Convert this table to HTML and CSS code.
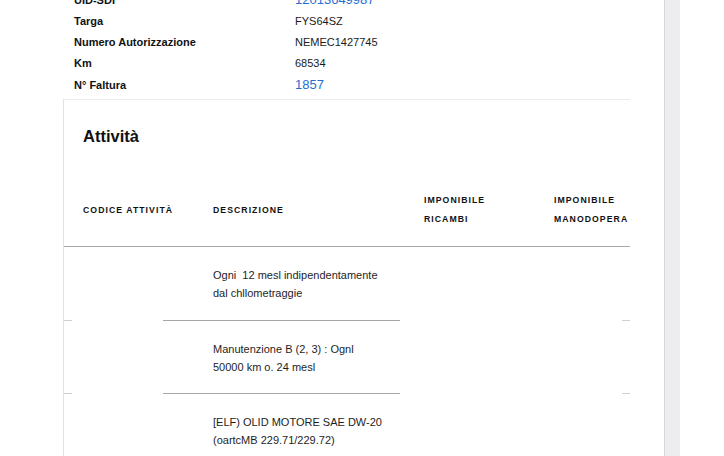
FILE: index.html
```html
<!DOCTYPE html>
<html lang="it">
<head>
<meta charset="utf-8">
<link rel="stylesheet" href="styles.css">
</head>
<body>
<div class="page">
  <main class="main">
    <dl class="info">
      <div class="info-row"><dt>UID-SDI</dt><dd class="link">12013649987</dd></div>
      <div class="info-row"><dt>Targa</dt><dd>FYS64SZ</dd></div>
      <div class="info-row"><dt>Numero Autorizzazione</dt><dd>NEMEC1427745</dd></div>
      <div class="info-row"><dt>Km</dt><dd>68534</dd></div>
      <div class="info-row"><dt>N° Faltura</dt><dd class="link">1857</dd></div>
    </dl>
    <section class="card">
      <h2 class="card-title">Attività</h2>
      <div class="thead">
        <div class="th">Codice attività</div>
        <div class="th">Descrizione</div>
        <div class="th">Imponibile<br>ricambi</div>
        <div class="th">Imponibile<br>manodopera</div>
      </div>
      <div class="trow first">
        <div class="td"></div>
        <div class="td">Ogni&nbsp; 12 mesl indipendentamente dal chllometraggie</div>
        <div class="td"></div>
        <div class="td"></div>
      </div>
      <div class="sep"><span class="seg seg-l"></span><span class="seg seg-m"></span><span class="seg seg-r"></span></div>
      <div class="trow">
        <div class="td"></div>
        <div class="td">Manutenzione B (2, 3) : Ognl 50000 km o. 24 mesl</div>
        <div class="td"></div>
        <div class="td"></div>
      </div>
      <div class="sep"><span class="seg seg-l"></span><span class="seg seg-m"></span><span class="seg seg-r"></span></div>
      <div class="trow">
        <div class="td"></div>
        <div class="td">[ELF) OLID MOTORE SAE DW-20 (oartcMB 229.71/229.72)</div>
        <div class="td"></div>
        <div class="td"></div>
      </div>
    </section>
  </main>
  <div class="scrollbar"></div>
  <div class="rest"></div>
</div>
</body>
</html>
```

FILE: styles.css
```css
html, body {
  margin: 0;
  padding: 0;
  background: #fff;
  height: 100%;
  overflow: hidden;
}
body {
  font-family: "Liberation Sans", Arial, sans-serif;
  color: #141414;
}
.page {
  display: flex;
  height: 456px;
}
.main {
  width: 664px;
  flex: none;
}
.scrollbar {
  width: 15px;
  flex: none;
  background: #ededef;
  border-left: 1px solid #d6d6d8;
}
.rest {
  flex: 1;
  background: #fff;
}
.info {
  margin: -11px 0 0 74px;
  padding: 0;
}
.info-row {
  display: grid;
  grid-template-columns: 221px 1fr;
  height: 21px;
  box-sizing: border-box;
  align-items: center;
}
.info-row:last-child {
  padding-top: 2px;
}
.info dt {
  font-size: 11px;
  font-weight: bold;
  color: #111;
}
.info dd {
  margin: 0;
  font-size: 11px;
  color: #1a1a1a;
}
.info dd.link {
  font-size: 13px;
  color: #1f6fd3;
}
.card {
  margin: 5px 0 0 63px;
  width: 566px;
  border-top: 1px solid #ebebed;
  border-left: 1px solid #e2e2e5;
  padding-bottom: 40px;
}
.card-title {
  margin: 0;
  padding: 26px 0 0 19px;
  font-size: 16.5px;
  line-height: 20px;
  font-weight: bold;
  color: #111;
}
.thead, .trow {
  display: grid;
  grid-template-columns: 130px 211px 130px 1fr;
}
.thead {
  padding: 45px 0 17px;
  border-bottom: 1px solid #a9a9ad;
  align-items: center;
}
.th {
  padding-left: 19px;
  font-size: 8.7px;
  line-height: 19px;
  font-weight: bold;
  letter-spacing: 1.05px;
  text-transform: uppercase;
  color: #111;
  white-space: nowrap;
}
.trow {
  padding: 19px 0 17px;
}
.trow.first {
  padding-bottom: 18px;
}
.td {
  padding-left: 19px;
  padding-right: 20px;
  font-size: 11px;
  line-height: 18px;
  color: #1e1e1e;
}
.sep {
  display: flex;
  height: 1px;
}
.seg {
  height: 1px;
}
.seg-l {
  width: 8px;
  background: #cfcfd3;
}
.seg-m {
  width: 237px;
  margin-left: 91px;
  background: #a6a6aa;
}
.seg-r {
  width: 8px;
  margin-left: 222px;
  background: #cfcfd3;
}
```
